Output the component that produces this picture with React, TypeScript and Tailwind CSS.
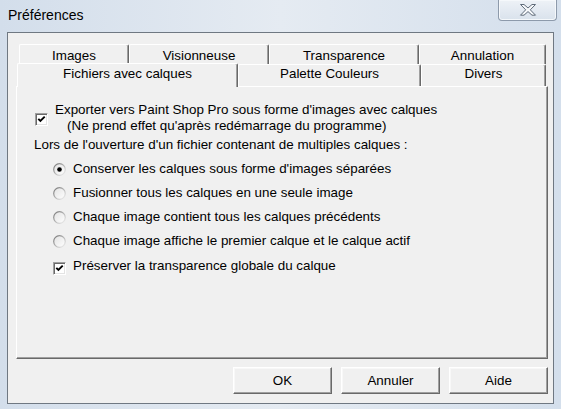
import React from "react";

function Checkbox({ className = "" }: { className?: string }) {
  return (
    <div
      className={
        "w-[13px] h-[13px] shrink-0 bg-white border border-t-[#a0a0a0] border-l-[#a0a0a0] border-r-white border-b-white shadow-[inset_1px_1px_0_#696969,inset_-1px_-1px_0_#e3e3e3] flex items-center justify-center " +
        className
      }
    >
      <svg width="11" height="11" viewBox="0 0 11 11">
        <path d="M2.3 4.8 L4.4 7 L8.7 2.6" fill="none" stroke="#000" strokeWidth="1.9" />
      </svg>
    </div>
  );
}

function Radio({ checked = false }: { checked?: boolean }) {
  return (
    <svg width="13" height="13" viewBox="0 0 13 13" className="shrink-0">
      <defs>
        <linearGradient id="rg" x1="0" y1="0" x2="1" y2="1">
          <stop offset="0" stopColor="#727272" />
          <stop offset="0.5" stopColor="#b4b4b4" />
          <stop offset="1" stopColor="#f4f4f4" />
        </linearGradient>
        <linearGradient id="rf" x1="0" y1="0" x2="1" y2="1">
          <stop offset="0" stopColor="#e2e2e2" />
          <stop offset="1" stopColor="#ffffff" />
        </linearGradient>
      </defs>
      <circle cx="6.5" cy="6.5" r="5.8" fill="url(#rf)" stroke="url(#rg)" strokeWidth="1.2" />
      {checked && <circle cx="6.5" cy="6.5" r="2.3" fill="#000" />}
    </svg>
  );
}

const tabBase =
  "box-border bg-[#f0f0f0] border-t border-l border-r border-t-white border-l-white border-r-[#696969] rounded-t-[2px] shadow-[inset_-1px_0_0_#a0a0a0] text-center text-[13.4px] leading-[16px] text-black whitespace-nowrap";

const btn =
  "w-[99px] h-[27px] box-border bg-[#f0f0f0] border border-t-white border-l-white border-r-[#696969] border-b-[#696969] shadow-[inset_-1px_-1px_0_#a0a0a0,inset_1px_1px_0_#f8f8f8] text-[13.4px] leading-[16px] text-black flex items-center justify-center";

export default function App() {
  return (
    <div className="w-[561px] h-[409px] overflow-hidden flex flex-col bg-gradient-to-r from-[#d3deeb] via-[#e5ebf2] to-[#d4dfec] font-['Liberation_Sans',Arial,sans-serif]">
      {/* Title bar */}
      <div className="h-[32px] shrink-0 flex justify-between items-start">
        <div className="pl-[8px] pt-[7px] text-[14px] leading-[17px] text-black">Préférences</div>
        <div className="mr-[4px] w-[59px] h-[21px] box-border border border-t-0 border-[#8d9aab] rounded-b-[4px] bg-gradient-to-b from-[#eef2f7] to-[#d9e2ec] shadow-[inset_0_0_0_1px_#f5f8fb] flex items-center justify-center">
          <svg width="18" height="12" viewBox="0 0 18 12">
            <polygon
              points="1.5,0.5 5,0.5 9,4 13,0.5 16.5,0.5 11.3,5.8 16.5,11.2 13,11.2 9,7.6 5,11.2 1.5,11.2 6.7,5.8"
              fill="#f7f9fb"
              stroke="#5f6b79"
              strokeWidth="1"
              strokeLinejoin="round"
            />
          </svg>
        </div>
      </div>

      {/* Client area */}
      <div className="mx-[7px] mb-[5px] flex-1 box-border border border-[#6f7882] bg-[#f0f0f0] pt-[11px] pl-[8px] pr-[5px] pb-[9px] flex flex-col">
        {/* Tab row 1 (back) */}
        <div className="flex h-[20px] pl-[3px]">
          <div className={tabBase + " w-[110px] h-[20px] pt-[3px]"}>Images</div>
          <div className={tabBase + " w-[140px] h-[20px] pt-[3px]"}>Visionneuse</div>
          <div className={tabBase + " w-[150px] h-[20px] pt-[3px]"}>Transparence</div>
          <div className={tabBase + " w-[127px] h-[20px] pt-[3px]"}>Annulation</div>
        </div>
        {/* Tab row 2 (front) */}
        <div className="flex items-end h-[22px] pl-[1px] relative z-10">
          <div className={tabBase + " w-[221px] h-[24px] mb-[-1px] pt-[2px]"}>Fichiers avec calques</div>
          <div className={tabBase + " w-[183px] h-[22px] pt-[1px]"}>Palette Couleurs</div>
          <div className={tabBase + " w-[125px] h-[22px] pt-[1px]"}>Divers</div>
        </div>

        {/* Panel */}
        <div className="h-[273px] box-border border border-t-white border-l-white border-r-[#696969] border-b-[#696969] shadow-[inset_-1px_-1px_0_#a0a0a0] pl-[17px] pt-[15px] text-[13.4px] leading-[16px] text-black">
          <div className="flex items-start">
            <Checkbox className="ml-[1px] mt-[11px]" />
            <div className="ml-[7px]">
              <div>Exporter vers Paint Shop Pro sous forme d'images avec calques</div>
              <div className="pl-[12px]">(Ne prend effet qu'après redémarrage du programme)</div>
            </div>
          </div>
          <div className="mt-[3px]">Lors de l'ouverture d'un fichier contenant de multiples calques :</div>
          <div className="mt-[8px] pl-[19px] flex flex-col gap-[8px]">
            <div className="flex items-center h-[16px]">
              <Radio checked />
              <span className="ml-[7px]">Conserver les calques sous forme d'images séparées</span>
            </div>
            <div className="flex items-center h-[16px]">
              <Radio />
              <span className="ml-[7px]">Fusionner tous les calques en une seule image</span>
            </div>
            <div className="flex items-center h-[16px]">
              <Radio />
              <span className="ml-[7px]">Chaque image contient tous les calques précédents</span>
            </div>
            <div className="flex items-center h-[16px]">
              <Radio />
              <span className="ml-[7px]">Chaque image affiche le premier calque et le calque actif</span>
            </div>
            <div className="flex items-start h-[16px] mt-[1px]">
              <Checkbox className="mt-[4px]" />
              <span className="ml-[7px]">Préserver la transparence globale du calque</span>
            </div>
          </div>
        </div>

        {/* Buttons */}
        <div className="mt-[8px] flex justify-end gap-[9px]">
          <div className={btn}>OK</div>
          <div className={btn}>Annuler</div>
          <div className={btn}>Aide</div>
        </div>
      </div>
    </div>
  );
}
